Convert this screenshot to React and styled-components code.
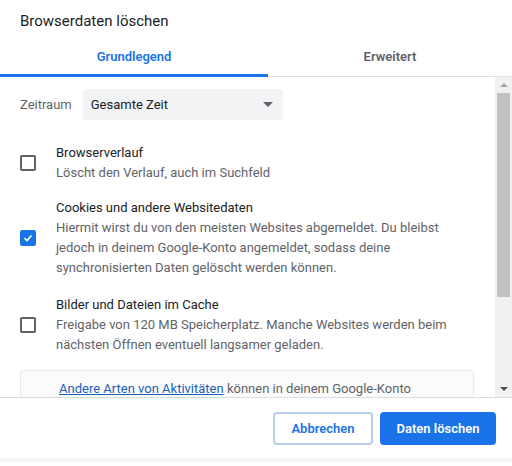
import React from "react";
import styled, { createGlobalStyle } from "styled-components";

const Global = createGlobalStyle`
  html, body { margin: 0; padding: 0; background: #fff; }
  body { font-family: "Segoe UI", Roboto, "Noto Sans", sans-serif; }
  * { box-sizing: border-box; }
`;

const Dialog = styled.div`
  width: 512px;
  height: 466px;
  display: flex;
  flex-direction: column;
  background: #fff;
  overflow: hidden;
`;

const Title = styled.h1`
  margin: 0;
  height: 36px;
  padding: 11px 20px 0;
  font-size: 15px;
  font-weight: 400;
  line-height: 20px;
  color: #202124;
`;

const Tabs = styled.div`
  display: flex;
  height: 41px;
  border-bottom: 1px solid #e0e0e0;
`;

const Tab = styled.div`
  width: ${(p) => p.$w}px;
  display: flex;
  align-items: center;
  justify-content: center;
  font-size: 13px;
  font-weight: 600;
  color: ${(p) => (p.$active ? "#1a73e8" : "#5f6368")};
  border-bottom: 3px solid ${(p) => (p.$active ? "#1a73e8" : "transparent")};
  margin-bottom: -1px;
  padding-top: 2px;
`;

const Body = styled.div`
  display: flex;
  height: 321px;
  border-bottom: 1px solid #dadce0;
`;

const Content = styled.div`
  flex: 1;
  overflow: hidden;
  padding: 12px 21px 0 20px;
  display: flex;
  flex-direction: column;
`;

const RangeRow = styled.div`
  display: flex;
  align-items: center;
  gap: 11px;
  margin-bottom: 23px;
`;

const Label = styled.span`
  font-size: 13px;
  color: #5f6368;
`;

const Select = styled.div`
  width: 200px;
  height: 31px;
  background: #f1f3f4;
  border-radius: 4px;
  display: flex;
  align-items: center;
  justify-content: space-between;
  padding: 0 8px 0 8px;
  font-size: 13px;
  color: #202124;
`;

const Caret = styled.span`
  width: 0;
  height: 0;
  border-left: 5px solid transparent;
  border-right: 5px solid transparent;
  border-top: 5px solid #5f6368;
  margin-right: 2px;
`;

const Option = styled.div`
  display: flex;
  align-items: center;
  gap: 20px;
  margin-bottom: ${(p) => p.$space}px;
`;

const Box = styled.div`
  flex: none;
  width: 16px;
  height: 16px;
  border-radius: 2px;
  border: 2px solid ${(p) => (p.$checked ? "#1a73e8" : "#5f6368")};
  background: ${(p) => (p.$checked ? "#1a73e8" : "#fff")};
  display: flex;
  align-items: center;
  justify-content: center;
`;

const OptionText = styled.div`
  font-size: 13px;
  line-height: 20px;
  white-space: nowrap;
`;

const OptionTitle = styled.div`
  color: #202124;
`;

const OptionDesc = styled.div`
  color: #5f6368;
`;

const InfoBox = styled.div`
  border: 1px solid #e8eaed;
  border-radius: 4px;
  background: #fbfbfc;
  padding: 8px 20px 20px 38px;
  font-size: 13px;
  line-height: 20px;
  color: #5f6368;
  white-space: nowrap;
`;

const Link = styled.a`
  color: #1a5fb4;
  text-decoration: underline;
`;

const Scrollbar = styled.div`
  width: 17px;
  background: #f1f1f1;
  display: flex;
  flex-direction: column;
  align-items: center;
`;

const Arrow = styled.div`
  height: 16px;
  display: flex;
  align-items: center;
  justify-content: center;
  width: 100%;
`;

const Tri = styled.span`
  width: 0;
  height: 0;
  border-left: 4px solid transparent;
  border-right: 4px solid transparent;
  ${(p) =>
    p.$up
      ? "border-bottom: 4px solid #a3a3a3;"
      : "border-top: 4px solid #505050;"}
`;

const Thumb = styled.div`
  width: 13px;
  height: 204px;
  background: #c1c1c1;
`;

const Spacer = styled.div`
  flex: 1;
`;

const Footer = styled.div`
  height: 64px;
  display: flex;
  justify-content: flex-end;
  align-items: center;
  gap: 7px;
  padding: 0 16px 0 0;
  border-bottom: 4px solid #f5f5f5;
`;

const Button = styled.button`
  height: 33px;
  padding: 0 16px;
  min-width: ${(p) => (p.$primary ? 116 : 100)}px;
  border-radius: 4px;
  font-family: inherit;
  font-size: 13px;
  font-weight: 600;
  cursor: pointer;
  border: ${(p) => (p.$primary ? "none" : "2px solid #b6cdee")};
  background: ${(p) => (p.$primary ? "#1a73e8" : "#fff")};
  color: ${(p) => (p.$primary ? "#fff" : "#1a73e8")};
`;

const Check = () => (
  <svg width="10" height="10" viewBox="0 0 10 10">
    <path d="M1.5 5.2 L4 7.5 L8.5 2.5" fill="none" stroke="#fff" strokeWidth="1.6" />
  </svg>
);

const options = [
  {
    title: "Browserverlauf",
    desc: ["Löscht den Verlauf, auch im Suchfeld"],
    checked: false,
    space: 15,
  },
  {
    title: "Cookies und andere Websitedaten",
    desc: [
      "Hiermit wirst du von den meisten Websites abgemeldet. Du bleibst",
      "jedoch in deinem Google-Konto angemeldet, sodass deine",
      "synchronisierten Daten gelöscht werden können.",
    ],
    checked: true,
    space: 17,
  },
  {
    title: "Bilder und Dateien im Cache",
    desc: [
      "Freigabe von 120 MB Speicherplatz. Manche Websites werden beim",
      "nächsten Öffnen eventuell langsamer geladen.",
    ],
    checked: false,
    space: 15,
  },
];

export default function App() {
  return (
    <>
      <Global />
      <Dialog>
        <Title>Browserdaten löschen</Title>
        <Tabs>
          <Tab $w={268} $active>Grundlegend</Tab>
          <Tab $w={244}>Erweitert</Tab>
        </Tabs>
        <Body>
          <Content>
            <RangeRow>
              <Label>Zeitraum</Label>
              <Select>
                Gesamte Zeit
                <Caret />
              </Select>
            </RangeRow>
            {options.map((o) => (
              <Option key={o.title} $space={o.space}>
                <Box $checked={o.checked}>{o.checked && <Check />}</Box>
                <OptionText>
                  <OptionTitle>{o.title}</OptionTitle>
                  {o.desc.map((d) => (
                    <OptionDesc key={d}>{d}</OptionDesc>
                  ))}
                </OptionText>
              </Option>
            ))}
            <InfoBox>
              <Link href="#">Andere Arten von Aktivitäten</Link> können in deinem Google-Konto
            </InfoBox>
          </Content>
          <Scrollbar>
            <Arrow>
              <Tri $up />
            </Arrow>
            <Thumb />
            <Spacer />
            <Arrow>
              <Tri />
            </Arrow>
          </Scrollbar>
        </Body>
        <Footer>
          <Button>Abbrechen</Button>
          <Button $primary>Daten löschen</Button>
        </Footer>
      </Dialog>
    </>
  );
}
